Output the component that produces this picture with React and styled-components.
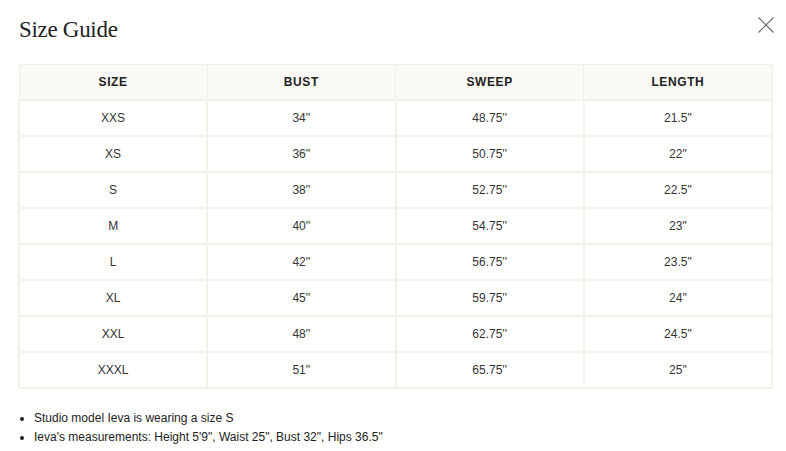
import React from "react";
import styled, { createGlobalStyle } from "styled-components";

const GlobalStyle = createGlobalStyle`
  body {
    margin: 0;
    background: #fff;
    font-family: "Liberation Sans", Arial, sans-serif;
  }
`;

const Modal = styled.div`
  width: 786px;
  height: 451px;
  box-sizing: border-box;
  padding: 15px 12px 0 18px;
`;

const TopBar = styled.div`
  display: flex;
  justify-content: space-between;
  align-items: flex-start;
  height: 49px;
`;

const Title = styled.h2`
  margin: 0;
  padding-left: 1px;
  font-family: "Liberation Serif", "Times New Roman", serif;
  font-size: 23px;
  font-weight: 400;
  line-height: 30px;
  color: #222;
  letter-spacing: -0.3px;
`;

const CloseButton = styled.button`
  border: none;
  background: none;
  padding: 0;
  margin: 2px 0 0 0;
  width: 16px;
  height: 16px;
  cursor: pointer;
`;

const Table = styled.table`
  width: 755px;
  border-collapse: collapse;
  table-layout: fixed;
  color: #333;
  font-size: 12px;
`;

const HeadCell = styled.th`
  height: 34px;
  padding: 0;
  background: #faf9f5;
  border: 1px solid #f2efe4;
  font-weight: 600;
  letter-spacing: 0.6px;
  color: #222;
  text-align: center;
`;

const Cell = styled.td`
  height: 34px;
  padding: 0;
  border: 2px solid #f3f1e8;
  text-align: center;
`;

const Notes = styled.ul`
  margin: 20px 0 0 0;
  padding-left: 16px;
  font-size: 12px;
  line-height: 19px;
  color: #222;
`;

const rows = [
  ["XXS", "34''", "48.75''", "21.5\""],
  ["XS", "36''", "50.75''", "22\""],
  ["S", "38''", "52.75''", "22.5\""],
  ["M", "40''", "54.75''", "23\""],
  ["L", "42''", "56.75''", "23.5\""],
  ["XL", "45''", "59.75''", "24\""],
  ["XXL", "48''", "62.75''", "24.5\""],
  ["XXXL", "51''", "65.75''", "25\""],
];

export default function App() {
  return (
    <>
      <GlobalStyle />
      <Modal>
        <TopBar>
          <Title>Size Guide</Title>
          <CloseButton aria-label="Close">
            <svg width="16" height="16" viewBox="0 0 16 16">
              <path d="M0.5 0.5 L15.5 15.5 M15.5 0.5 L0.5 15.5" stroke="#666" strokeWidth="1.1" fill="none" />
            </svg>
          </CloseButton>
        </TopBar>
        <Table>
          <thead>
            <tr>
              <HeadCell>SIZE</HeadCell>
              <HeadCell>BUST</HeadCell>
              <HeadCell>SWEEP</HeadCell>
              <HeadCell>LENGTH</HeadCell>
            </tr>
          </thead>
          <tbody>
            {rows.map((r) => (
              <tr key={r[0]}>
                {r.map((v, i) => (
                  <Cell key={i}>{v}</Cell>
                ))}
              </tr>
            ))}
          </tbody>
        </Table>
        <Notes>
          <li>Studio model Ieva is wearing a size S</li>
          <li>Ieva's measurements: Height 5'9", Waist 25", Bust 32", Hips 36.5"</li>
        </Notes>
      </Modal>
    </>
  );
}
